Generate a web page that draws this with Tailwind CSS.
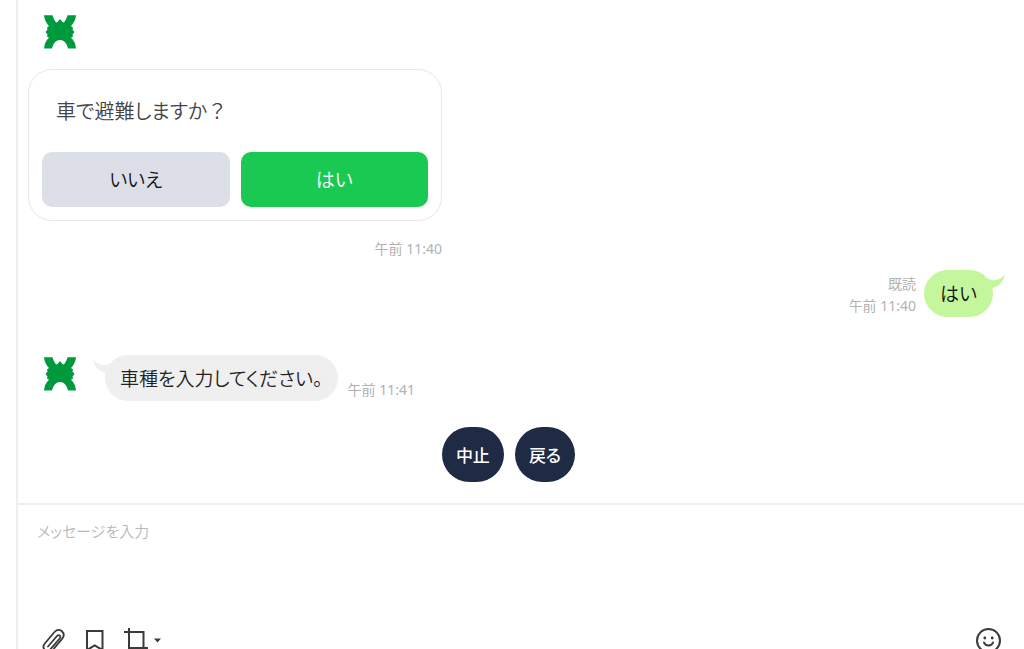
<!DOCTYPE html>
<html lang="ja">
<head>
<meta charset="utf-8">
<meta name="viewport" content="width=device-width, initial-scale=1">
<title>チャット</title>
<script src="https://cdn.jsdelivr.net/npm/@tailwindcss/browser@4"></script>
</head>
<body class="flex h-screen overflow-hidden bg-white pl-4 font-['Noto_Sans_CJK_JP',sans-serif] font-[350] [font-feature-settings:'palt']">
<svg class="hidden" aria-hidden="true">
  <symbol id="emblem" viewBox="0 0 34 34">
    <path fill="#009a3e" d="M1 0.300 H9.500 Q10.500 4.500 13 7.500 L14.500 7 L17 4 L19.500 7 L21 7.500 Q23.500 4.500 24.500 0.300 H33 Q32.500 6.500 28 11 L30 12.500 L29.500 14.500 L31.500 17 L29.500 19.500 L30 21.500 L28 22.800 Q32.500 27 33 33.500 H25 Q23 25 17 25 Q11 25 9 33.500 H1 Q1.500 27 6 22.800 L4 21.500 L4.500 19.500 L2.500 17 L4.500 14.500 L4 12.500 L6 11 Q1.500 6.500 1 0.300 Z"/>
  </symbol>
</svg>
<main class="flex min-w-0 flex-1 flex-col border-l-2 border-[#eeeeee]">
  <section class="flex shrink-0 flex-col pt-[15px] pr-[31px] pb-[21px] pl-[10px]" aria-label="トーク">
    <svg class="ml-[15px] size-[34px]" role="img" aria-label="公式アカウント"><use href="#emblem"/></svg>

    <article class="mt-5 w-full max-w-[414px] rounded-3xl border border-[#e8e8e8] px-[13px] pt-[27px] pb-[13px]">
      <p class="pl-[14px] text-[20px] leading-7 text-[#444444]">車で避難しますか<span class="[font-feature-settings:normal]">？</span></p>
      <div class="mt-[27px] grid grid-cols-2 gap-[11px]">
        <button type="button" class="h-[55px] rounded-[10px] bg-[#dcdfe8] text-[19px] text-[#111111]">いいえ</button>
        <button type="button" class="h-[55px] rounded-[10px] bg-[#1ac951] text-[19px] text-white">はい</button>
      </div>
    </article>
    <time class="mt-[18px] w-full max-w-[414px] text-right font-['Noto_Sans','Noto_Sans_CJK_JP',sans-serif] text-sm font-normal leading-5 text-[#b2b2b2] [font-feature-settings:normal]">午前 11:40</time>

    <div class="mt-[11px] flex items-end justify-end gap-2">
      <div class="flex flex-col text-right font-['Noto_Sans','Noto_Sans_CJK_JP',sans-serif] text-sm font-normal leading-[22px] text-[#b2b2b2] [font-feature-settings:normal]">
        <span>既読</span>
        <time>午前 11:40</time>
      </div>
      <p class="relative flex h-[47px] items-center rounded-3xl bg-[#c3f69d] px-4 text-[19px] text-[#111111]">はい
        <svg class="absolute top-1 -right-3 h-5 w-6" viewBox="0 0 24 20" aria-hidden="true"><path fill="#c3f69d" d="M1 2 L8 5 Q11 7 15 6 Q20 5 24 0.500 Q22 11 12 14 L6 17 Z"/></svg>
      </p>
    </div>

    <div class="mt-[38px] flex items-end pl-[15px]">
      <svg class="mt-[2px] size-[34px] shrink-0 self-start" role="img" aria-label="公式アカウント"><use href="#emblem"/></svg>
      <p class="relative ml-7 flex h-[46px] items-center rounded-3xl bg-[#efefef] px-[15px] text-[19px] text-[#222222]">車種を入力してください。
        <svg class="absolute top-1 -left-3 h-5 w-6" viewBox="0 0 24 20" aria-hidden="true"><path fill="#efefef" d="M23 2 L16 5 Q13 7 9 6 Q4 5 0 0.500 Q2 11 12 14 L18 17 Z"/></svg>
      </p>
      <time class="ml-[10px] font-['Noto_Sans','Noto_Sans_CJK_JP',sans-serif] text-sm font-normal leading-[22px] text-[#b2b2b2] [font-feature-settings:normal]">午前 11:41</time>
    </div>

    <div class="mt-[26px] flex justify-center gap-[11px] pr-1">
      <button type="button" class="h-[55px] rounded-full bg-[#1f2a44] px-[14px] text-[17px] font-medium text-white">中止</button>
      <button type="button" class="h-[55px] rounded-full bg-[#1f2a44] px-[14px] text-[17px] font-medium text-white">戻る</button>
    </div>
  </section>

  <form class="flex shrink-0 flex-col border-t-2 border-[#eeeeee] pt-[14px]">
    <textarea aria-label="メッセージを入力" placeholder="メッセージを入力" class="h-[108px] w-full resize-none px-[19px] text-[15px] leading-6 text-[#222222] outline-none placeholder:text-[#b8b8b8]"></textarea>
    <div class="flex items-center pr-[22px] pl-[23px] text-[#3a3a3a]">
      <button type="button" aria-label="ファイルを添付">
        <svg class="size-[26px]" viewBox="0 0 26 26" fill="none" stroke="currentColor" stroke-width="1.800" stroke-linecap="round" stroke-linejoin="round"><path d="M7 18.500 L16 8 Q17.500 6.500 18.800 7.600 Q20 8.800 18.700 10.500 L9.500 21.200 Q6.800 24 3.800 21.800 Q1 19 3.600 15.800 L13.500 4 Q17 0.300 20.700 3 Q24.300 6.500 21.500 10.300 L13 20.500"/></svg>
      </button>
      <button type="button" class="ml-[15px]" aria-label="定型文">
        <svg class="size-[26px]" viewBox="0 0 26 26" fill="none" stroke="currentColor" stroke-width="2"><path d="M5 3 H20.500 V22 L12.700 17.500 L5 22 Z"/></svg>
      </button>
      <button type="button" class="ml-4 flex items-center gap-1" aria-label="画面キャプチャ">
        <svg class="size-[26px]" viewBox="0 0 26 26" fill="none" stroke="currentColor" stroke-width="2"><path d="M5 0 V20 H24 M0 4 H19.500 V25"/></svg>
        <svg class="h-[5px] w-[7px]" viewBox="0 0 7 5" fill="currentColor"><path d="M0 0.500 H7 L3.500 4.500 Z"/></svg>
      </button>
      <button type="button" class="ml-auto" aria-label="スタンプ">
        <svg class="size-[27px]" viewBox="0 0 27 27" fill="none" stroke="currentColor" stroke-width="2"><circle cx="13.500" cy="13.500" r="11.500"/><path stroke-linecap="round" d="M9 15.500 Q10 18.500 13.500 18.500 Q17 18.500 18 15.500"/><circle cx="9.800" cy="11" r="1.400" fill="currentColor" stroke="none"/><circle cx="17.200" cy="11" r="1.400" fill="currentColor" stroke="none"/></svg>
      </button>
    </div>
  </form>
</main>
</body>
</html>
